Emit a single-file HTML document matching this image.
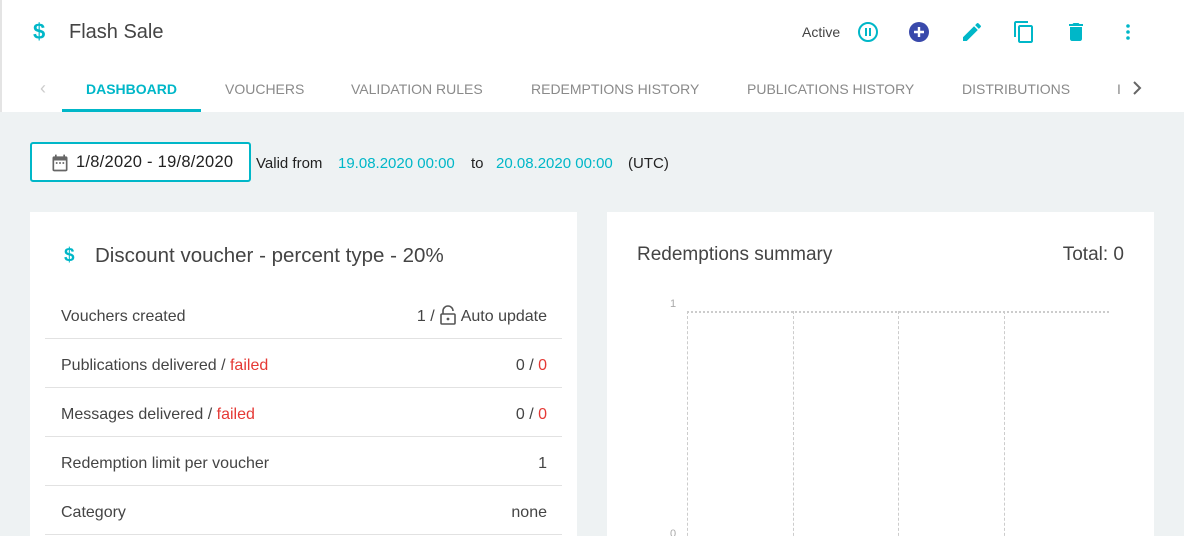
<!DOCTYPE html>
<html><head><meta charset="utf-8"><style>
*{margin:0;padding:0;box-sizing:border-box}
html,body{width:1184px;height:536px;overflow:hidden}
body{background:#eef2f3;font-family:"Liberation Sans",sans-serif;position:relative;color:#333}
.hdr{position:absolute;left:0;top:0;width:1184px;height:112px;background:#fff;box-shadow:inset 2px 0 0 #e4e4e4}
.abs{position:absolute}
.tab{position:absolute;top:81px;font-size:14px;color:#8a8a8a;white-space:nowrap}
.card{position:absolute;background:#fff;top:212px;height:324px;overflow:hidden}
.row{position:absolute;left:15px;width:517px;height:49px;border-bottom:1px solid #e2e2e2;font-size:16px;color:#444}
.row .l{position:absolute;left:16px;top:18px}
.row .r{position:absolute;right:15px;top:18px}
.red{color:#e53935}
.teal{color:#00b7c8}
.v{position:absolute;top:155px;font-size:15px;color:#222;white-space:nowrap}
</style></head><body>
<div class="hdr">
<div class="abs teal" style="left:33px;top:19px;font-size:22px;font-weight:bold">$</div>
<div class="abs" style="left:69px;top:21px;font-size:20px;color:#444">Flash Sale</div>
<div class="abs" style="left:802px;top:24px;font-size:14px;color:#444">Active</div>
<svg class="abs" style="left:856px;top:20px" width="24" height="24" viewBox="0 0 24 24"><circle cx="12" cy="12" r="9" fill="none" stroke="#00b7c8" stroke-width="2"/><rect x="9" y="8" width="2" height="8" fill="#00b7c8"/><rect x="13" y="8" width="2" height="8" fill="#00b7c8"/></svg>
<svg class="abs" style="left:907px;top:20px" width="24" height="24" viewBox="0 0 24 24"><circle cx="12" cy="12" r="10" fill="#3949ab"/><path d="M12 7v10M7 12h10" stroke="#fff" stroke-width="2.4"/></svg>
<svg class="abs" style="left:960px;top:20px" width="24" height="24" viewBox="0 0 24 24"><path d="M3 17.25V21h3.75L17.8 9.94l-3.75-3.75L3 17.25zM20.7 7.04a1 1 0 000-1.41l-2.34-2.34a1 1 0 00-1.41 0l-1.83 1.83 3.75 3.75 1.83-1.83z" fill="#00b7c8"/></svg>
<svg class="abs" style="left:1012px;top:20px" width="24" height="24" viewBox="0 0 24 24"><path d="M16 1H4c-1.1 0-2 .9-2 2v14h2V3h12V1zm3 4H8c-1.1 0-2 .9-2 2v14c0 1.1.9 2 2 2h11c1.1 0 2-.9 2-2V7c0-1.1-.9-2-2-2zm0 16H8V7h11v14z" fill="#00b7c8"/></svg>
<svg class="abs" style="left:1064px;top:20px" width="24" height="24" viewBox="0 0 24 24"><path d="M6 19c0 1.1.9 2 2 2h8c1.1 0 2-.9 2-2V7H6v12zM19 4h-3.5l-1-1h-5l-1 1H5v2h14V4z" fill="#00b7c8"/></svg>
<svg class="abs" style="left:1116px;top:20px" width="24" height="24" viewBox="0 0 24 24"><circle cx="12" cy="6" r="1.8" fill="#00b7c8"/><circle cx="12" cy="12" r="1.8" fill="#00b7c8"/><circle cx="12" cy="18" r="1.8" fill="#00b7c8"/></svg>
<div class="abs" style="left:40px;top:78px;font-size:18px;color:#ccc">‹</div>
<div class="tab" style="left:86px;color:#00b7c8;font-weight:bold">DASHBOARD</div>
<div class="abs" style="left:62px;top:109px;width:139px;height:3px;background:#00b7c8"></div>
<div class="tab" style="left:225px">VOUCHERS</div>
<div class="tab" style="left:351px">VALIDATION RULES</div>
<div class="tab" style="left:531px">REDEMPTIONS HISTORY</div>
<div class="tab" style="left:747px">PUBLICATIONS HISTORY</div>
<div class="tab" style="left:962px">DISTRIBUTIONS</div>
<div class="tab" style="left:1117px">I</div>
<svg class="abs" style="left:1130px;top:80px" width="14" height="16" viewBox="0 0 14 16"><path d="M4 2l6 6-6 6" fill="none" stroke="#666" stroke-width="2"/></svg>
</div>
<div class="abs" style="left:30px;top:142px;width:221px;height:40px;border:2px solid #00b7c8;border-radius:3px;background:#fff"></div>
<svg class="abs" style="left:50px;top:153px" width="20" height="20" viewBox="0 0 24 24"><path d="M19 4h-1V2h-2v2H8V2H6v2H5a2 2 0 00-2 2v14a2 2 0 002 2h14a2 2 0 002-2V6a2 2 0 00-2-2zm0 16H5V9h14v11zM7 11h2v2H7zm4 0h2v2h-2zm4 0h2v2h-2z" fill="#666"/></svg>
<div class="abs" style="left:76px;top:153px;font-size:16.5px;color:#222;letter-spacing:0.25px">1/8/2020 - 19/8/2020</div>
<div class="v" style="left:256px">Valid from</div>
<div class="v" style="left:338px;color:#00b7c8">19.08.2020 00:00</div>
<div class="v" style="left:471px">to</div>
<div class="v" style="left:496px;color:#00b7c8">20.08.2020 00:00</div>
<div class="v" style="left:628px">(UTC)</div>
<div class="card" style="left:30px;width:547px">
<div class="abs teal" style="left:34px;top:33px;font-size:19px;font-weight:bold">$</div>
<div class="abs" style="left:65px;top:32px;font-size:20.5px;color:#444;white-space:nowrap">Discount voucher - percent type - 20%</div>
<div class="row" style="top:78px"><span class="l">Vouchers created</span><span class="r" style="top:15px">1 / <svg width="18" height="20" viewBox="0 0 18 20" style="vertical-align:-4px"><path d="M4 9V6a5 5 0 0110 0" fill="none" stroke="#555" stroke-width="1.6"/><rect x="2" y="9" width="14" height="10" rx="1" fill="none" stroke="#555" stroke-width="1.6"/><circle cx="9" cy="14" r="1.4" fill="#555"/></svg> Auto update</span></div>
<div class="row" style="top:127px"><span class="l">Publications delivered / <span class="red">failed</span></span><span class="r">0 / <span class="red">0</span></span></div>
<div class="row" style="top:176px"><span class="l">Messages delivered / <span class="red">failed</span></span><span class="r">0 / <span class="red">0</span></span></div>
<div class="row" style="top:225px"><span class="l">Redemption limit per voucher</span><span class="r">1</span></div>
<div class="row" style="top:274px"><span class="l">Category</span><span class="r">none</span></div>
</div>
<div class="card" style="left:607px;width:547px">
<div class="abs" style="left:30px;top:32px;font-size:19px;color:#444;white-space:nowrap">Redemptions summary</div>
<div class="abs" style="right:30px;top:32px;font-size:19px;color:#444">Total: 0</div>
<div class="abs" style="left:63px;top:86px;font-size:11px;color:#aaa">1</div>
<div class="abs" style="left:63px;top:316px;font-size:11px;color:#aaa">0</div>
<div class="abs" style="left:80px;top:99px;width:422px;height:0;border-top:2px dotted #ccc"></div>
<div class="abs" style="left:80px;top:99px;width:0;height:240px;border-left:1px dashed #ccc"></div>
<div class="abs" style="left:186px;top:99px;width:0;height:240px;border-left:1px dashed #ccc"></div>
<div class="abs" style="left:291px;top:99px;width:0;height:240px;border-left:1px dashed #ccc"></div>
<div class="abs" style="left:397px;top:99px;width:0;height:240px;border-left:1px dashed #ccc"></div>
</div>
</body></html>
